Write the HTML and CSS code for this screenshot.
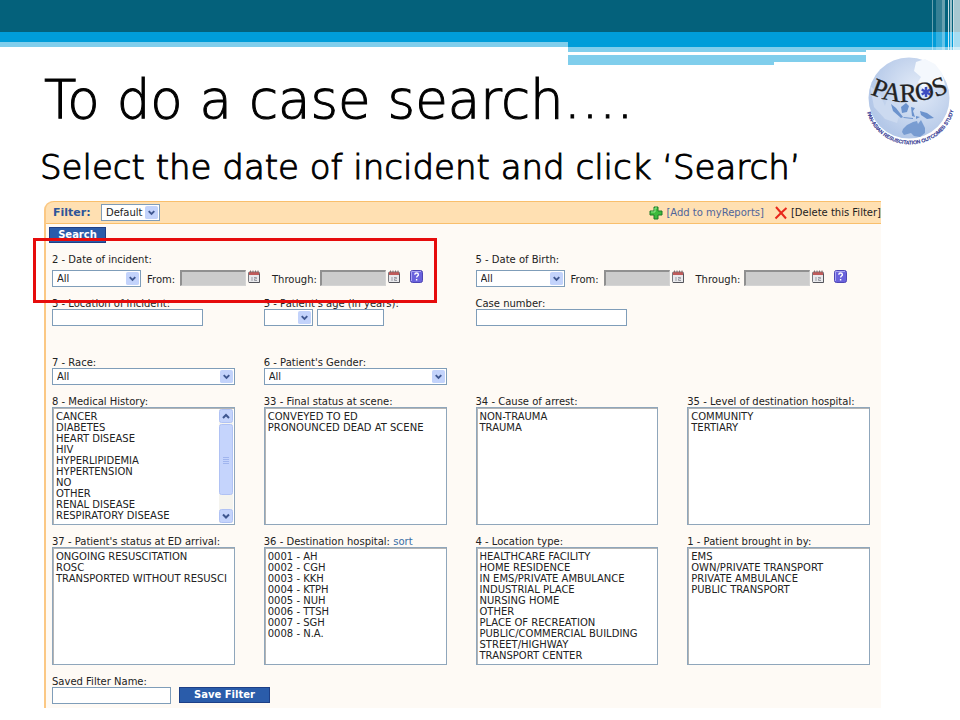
FILE: index.html
```
<!DOCTYPE html>
<html lang="en">
<head>
    <meta charset="UTF-8">
    <meta name="viewport" content="width=device-width, initial-scale=1.0">
    <title>To do a case search</title>
    <link rel="stylesheet" href="styles.css">
</head>
<body>
    <svg class="sprites" aria-hidden="true">
        <symbol id="arrow" viewBox="0 0 14 14">
            <rect width="14" height="14" rx="2" fill="#c3d3fb"/>
            <path d="M4 5.5l3 3 3-3" fill="none" stroke="#3f5790" stroke-width="2"/>
        </symbol>
        <symbol id="calendar" viewBox="0 0 12 13">
            <rect x="0.5" y="2" width="11" height="10.5" rx="1" fill="#e9e9ec" stroke="#77777d"/>
            <rect x="1" y="2" width="10" height="3" fill="#c05a5a"/>
            <path d="M2.5 0.5v2.5M5 0.5v2.5M7.5 0.5v2.5M10 0.5v2.5" stroke="#8a6a6a"/>
            <path d="M4 7v4M6 7.5h2.5v1.3h-2v1.7h2.5" fill="none" stroke="#9d9da5"/>
            <path d="M1 12.5h10.5V4" fill="none" stroke="#55555c"/>
        </symbol>
        <symbol id="help" viewBox="0 0 13 13">
            <rect x="0.5" y="0.5" width="12" height="12" rx="2" fill="#6a62dc" stroke="#4e46b4"/>
            <path d="M1.5 11V1.5H11" fill="none" stroke="#a9a4f2"/>
            <path d="M4.8 4.7c0-2.2 3.6-2.2 3.6 0 0 1.4-1.8 1.3-1.8 2.8M6.6 9v1.5" fill="none" stroke="#fff" stroke-width="1.4"/>
        </symbol>
    </svg>

    <header class="banner">
        <div class="band band-dark"></div>
        <div class="band band-blue"></div>
        <div class="steps">
            <div class="step-left"></div>
            <div class="step-right">
                <div class="step-blue"></div>
                <div class="step-light"></div>
                <div class="step-gap"></div>
                <div class="step-light"></div>
                <div class="step-short"></div>
            </div>
        </div>
        <svg class="stripes" viewBox="0 0 28 50" aria-hidden="true">
            <g fill="#fff">
                <path d="M0 0h1v50H0z" opacity=".4"/>
                <path d="M4 0h6v50H4z" opacity=".2"/>
                <path d="M10 0h3v50h-3z" opacity=".4"/>
                <path d="M16 0h1v50h-1z" opacity=".8"/>
                <path d="M18 0h2v50h-2z" opacity=".6"/>
                <path d="M21 0h1v50h-1z" opacity=".8"/>
                <path d="M22 0h6v50h-6z" opacity=".65"/>
            </g>
        </svg>
        <svg class="logo" viewBox="0 0 94 100" role="img" aria-label="PAROS">
            <defs>
                <radialGradient id="globe" cx=".6" cy=".4" r=".6">
                    <stop offset="0" stop-color="#e4ecf8"/>
                    <stop offset="1" stop-color="#b4c8e8"/>
                </radialGradient>
                <path id="name" d="M4 44Q44 62 92 38"/>
                <path id="arc" d="M1 62.500A45 45 0 0 0 88 59"/>
            </defs>
            <rect width="94" height="100" fill="#fff"/>
            <circle cx="43" cy="48" r="40.500" fill="url(#globe)"/>
            <path d="M50 12l9-3 10 5 7 9 3 12-9 3-7-4-6 5-5-7 3-5-7-6z" fill="#f4f8fd"/>
            <path d="M4 36l10 8 5 12 2-6 8 3 5 10-3 10-12-4-11-12z" fill="#ccdaf0"/>
            <g fill="#6c93cd">
                <path d="M25 54l5 4 7 9-2 1-8-7zM35 57l5-4 3 3-2 6-5 1zM45 57l4 1-2 3 2 6-3-1zM37 67l10 1v1l-9-1zM50 66l4 1-4 2zM54 61l7 2 7 5-7 1-6-4z"/>
                <path d="M37 79l4-4 6-3 4-1 1 3 3-4 4 8 0 5-5 4-6-1-3-3-7 2-2-3z" opacity=".85"/>
            </g>
            <text class="logo-name"><textPath href="#name">PAROS</textPath></text>
            <path d="M60 37v10M55.700 39.500l8.600 5M64.300 39.500l-8.600 5" stroke="#3c4cc0" stroke-width="2.400"/>
            <text class="logo-ring"><textPath href="#arc">PAN-ASIAN RESUSCITATION OUTCOMES STUDY</textPath></text>
        </svg>
    </header>

    <main class="slide">
        <h1 class="title">To do a case search….</h1>
        <p class="subtitle">Select the date of incident and click ‘Search’</p>

        <form class="panel">
            <div class="toolbar">
                <label class="filter-label" for="filter">Filter:</label>
                <div class="select select-filter">
                    <select id="filter"><option>Default</option></select>
                    <svg><use href="#arrow"/></svg>
                </div>
                <a class="tool tool-add" href="#">
                    <svg viewBox="0 0 14 14"><path d="M5 1h4v4h4v4H9v4H5V9H1V5h4z" fill="#3dba3d" stroke="#1c7a28" stroke-linejoin="round"/><path d="M6 6V2h2M2 6h4" fill="none" stroke="#8fe88a"/></svg>
                    [Add to myReports]
                </a>
                <a class="tool tool-delete" href="#">
                    <svg viewBox="0 0 14 14"><path d="M2 1l10 11.500M12.500 2L7 7l-5.500 5.500" fill="none" stroke="#e8281c" stroke-width="2"/></svg>
                    [Delete this Filter]
                </a>
            </div>

            <button class="btn btn-search" type="button">Search</button>
            <div class="highlight"></div>

            <div class="fields">
                <div class="field field-date">
                    <label for="incident">2 - Date of incident:</label>
                    <div class="date-row">
                        <div class="select select-date">
                            <select id="incident"><option>All</option></select>
                            <svg><use href="#arrow"/></svg>
                        </div>
                        <label class="from" for="incident-from">From:</label>
                        <input class="date" id="incident-from" type="text" disabled>
                        <svg class="icon-cal"><use href="#calendar"/></svg>
                        <label class="through" for="incident-to">Through:</label>
                        <input class="date" id="incident-to" type="text" disabled>
                        <svg class="icon-cal"><use href="#calendar"/></svg>
                        <svg class="icon-help"><use href="#help"/></svg>
                    </div>
                </div>
                <div class="field field-date">
                    <label for="birth">5 - Date of Birth:</label>
                    <div class="date-row">
                        <div class="select select-date">
                            <select id="birth"><option>All</option></select>
                            <svg><use href="#arrow"/></svg>
                        </div>
                        <label class="from" for="birth-from">From:</label>
                        <input class="date" id="birth-from" type="text" disabled>
                        <svg class="icon-cal"><use href="#calendar"/></svg>
                        <label class="through" for="birth-to">Through:</label>
                        <input class="date" id="birth-to" type="text" disabled>
                        <svg class="icon-cal"><use href="#calendar"/></svg>
                        <svg class="icon-help"><use href="#help"/></svg>
                    </div>
                </div>

                <div class="field field-text">
                    <label for="location">3 - Location of incident:</label>
                    <input class="text" id="location" type="text">
                </div>
                <div class="field field-text">
                    <label for="age">5 - Patient's age (in years):</label>
                    <div class="age-row">
                        <div class="select select-age">
                            <select aria-label="Age comparison"><option></option></select>
                            <svg><use href="#arrow"/></svg>
                        </div>
                        <input class="text text-age" id="age" type="text">
                    </div>
                </div>
                <div class="field field-text field-wide">
                    <label for="case">Case number:</label>
                    <input class="text" id="case" type="text">
                </div>

                <div class="field">
                    <label for="race">7 - Race:</label>
                    <div class="select">
                        <select id="race"><option>All</option></select>
                        <svg><use href="#arrow"/></svg>
                    </div>
                </div>
                <div class="field">
                    <label for="gender">6 - Patient's Gender:</label>
                    <div class="select">
                        <select id="gender"><option>All</option></select>
                        <svg><use href="#arrow"/></svg>
                    </div>
                </div>

                <div class="field row-start">
                    <label for="history">8 - Medical History:</label>
                    <div class="listbox">
                        <select id="history" multiple size="10">
                            <option>CANCER</option>
                            <option>DIABETES</option>
                            <option>HEART DISEASE</option>
                            <option>HIV</option>
                            <option>HYPERLIPIDEMIA</option>
                            <option>HYPERTENSION</option>
                            <option>NO</option>
                            <option>OTHER</option>
                            <option>RENAL DISEASE</option>
                            <option>RESPIRATORY DISEASE</option>
                        </select>
                        <svg class="scrollbar" viewBox="0 0 14 114" aria-hidden="true">
                            <rect width="14" height="114" fill="#f5f4ef"/>
                            <g fill="#c5d4fc" stroke="#b0c2f4">
                                <rect x="0.500" y="0.500" width="13" height="13" rx="2"/>
                                <rect x="0.500" y="15.500" width="13" height="70" rx="2"/>
                                <rect x="0.500" y="100.500" width="13" height="13" rx="2"/>
                            </g>
                            <path d="M4 9l3-3 3 3M4 105.500l3 3 3-3" fill="none" stroke="#3f5790" stroke-width="2"/>
                            <path d="M4 48.500h6M4 50.500h6M4 52.500h6M4 54.500h6" stroke="#a0b5ee"/>
                        </svg>
                    </div>
                </div>
                <div class="field">
                    <label for="final">33 - Final status at scene:</label>
                    <div class="listbox">
                        <select id="final" multiple size="10">
                            <option>CONVEYED TO ED</option>
                            <option>PRONOUNCED DEAD AT SCENE</option>
                        </select>
                    </div>
                </div>
                <div class="field">
                    <label for="cause">34 - Cause of arrest:</label>
                    <div class="listbox">
                        <select id="cause" multiple size="10">
                            <option>NON-TRAUMA</option>
                            <option>TRAUMA</option>
                        </select>
                    </div>
                </div>
                <div class="field">
                    <label for="level">35 - Level of destination hospital:</label>
                    <div class="listbox">
                        <select id="level" multiple size="10">
                            <option>COMMUNITY</option>
                            <option>TERTIARY</option>
                        </select>
                    </div>
                </div>

                <div class="field">
                    <label for="status">37 - Patient's status at ED arrival:</label>
                    <div class="listbox">
                        <select id="status" multiple size="10">
                            <option>ONGOING RESUSCITATION</option>
                            <option>ROSC</option>
                            <option>TRANSPORTED WITHOUT RESUSCI</option>
                        </select>
                    </div>
                </div>
                <div class="field">
                    <div class="label-row"><label for="hospital">36 - Destination hospital:</label> <a class="sort" href="#">sort</a></div>
                    <div class="listbox">
                        <select id="hospital" multiple size="10">
                            <option>0001 - AH</option>
                            <option>0002 - CGH</option>
                            <option>0003 - KKH</option>
                            <option>0004 - KTPH</option>
                            <option>0005 - NUH</option>
                            <option>0006 - TTSH</option>
                            <option>0007 - SGH</option>
                            <option>0008 - N.A.</option>
                        </select>
                    </div>
                </div>
                <div class="field">
                    <label for="loctype">4 - Location type:</label>
                    <div class="listbox">
                        <select id="loctype" multiple size="10">
                            <option>HEALTHCARE FACILITY</option>
                            <option>HOME RESIDENCE</option>
                            <option>IN EMS/PRIVATE AMBULANCE</option>
                            <option>INDUSTRIAL PLACE</option>
                            <option>NURSING HOME</option>
                            <option>OTHER</option>
                            <option>PLACE OF RECREATION</option>
                            <option>PUBLIC/COMMERCIAL BUILDING</option>
                            <option>STREET/HIGHWAY</option>
                            <option>TRANSPORT CENTER</option>
                        </select>
                    </div>
                </div>
                <div class="field">
                    <label for="brought">1 - Patient brought in by:</label>
                    <div class="listbox">
                        <select id="brought" multiple size="10">
                            <option>EMS</option>
                            <option>OWN/PRIVATE TRANSPORT</option>
                            <option>PRIVATE AMBULANCE</option>
                            <option>PUBLIC TRANSPORT</option>
                        </select>
                    </div>
                </div>
            </div>

            <div class="save">
                <label for="saved">Saved Filter Name:</label>
                <div class="save-row">
                    <input class="text text-save" id="saved" type="text">
                    <button class="btn btn-save" type="button">Save Filter</button>
                </div>
            </div>
        </form>
    </main>
</body>
</html>
```

FILE: styles.css
```
* {
    box-sizing: border-box;
}
body {
    margin: 0;
    background-color: white;
    color: #222;
    font-family: "DejaVu Sans", Verdana, sans-serif;
    font-size: 10px;
    line-height: 11px;
}
input, select, button {
    font: inherit;
    color: inherit;
    margin: 0;
}
a {
    text-decoration: none;
}
svg {
    display: block;
    flex: none;
}
.sprites {
    position: absolute;
    width: 0;
    height: 0;
}

/* banner */
.banner {
    position: relative;
}
.band-dark {
    height: 32px;
    background-color: #04617b;
}
.band-blue {
    height: 10px;
    background-color: #009dd9;
}
.steps {
    display: flex;
}
.step-left {
    width: 568px;
    height: 5px;
    background-color: #80ceec;
}
.step-right {
    flex: 1;
}
.step-blue {
    height: 5px;
    background-color: #009dd9;
}
.step-light {
    height: 5px;
    background-color: #80ceec;
}
.step-gap {
    height: 3px;
}
.step-gap + .step-light {
    height: 7px;
}
.step-short {
    width: 206px;
    height: 3px;
    background-color: #80ceec;
}
.stripes {
    position: absolute;
    top: 0;
    right: 0;
    width: 28px;
    height: 50px;
}
.logo {
    position: absolute;
    top: 50px;
    right: 0;
    width: 94px;
    height: 100px;
}
.logo-name {
    font-family: "Liberation Serif", serif;
    font-size: 26px;
    fill: #222;
    stroke: #222;
    stroke-width: 0.3;
}
.logo-ring {
    font-family: "Liberation Sans", sans-serif;
    font-size: 5px;
    fill: #3b3f96;
    stroke: #3b3f96;
    stroke-width: 0.3;
}

/* headings */
.title {
    margin: 0;
    padding: 3px 44px 0;
    font-family: "Century Gothic", "DejaVu Sans", sans-serif;
    font-size: 53px;
    font-weight: 200;
    line-height: 64px;
    color: black;
    -webkit-text-stroke: 1px black;
}
.subtitle {
    margin: 0;
    padding: 13px 40px 12px;
    font-family: "Century Gothic", "DejaVu Sans", sans-serif;
    font-size: 34px;
    font-weight: 200;
    line-height: 44px;
    color: black;
    -webkit-text-stroke: 1px black;
}

/* filter panel */
.panel {
    position: relative;
    margin: 0 79px 0 44px;
    background-color: #fefaf5;
    border-left: 2px solid #fbc884;
    border-top-left-radius: 9px;
}
.toolbar {
    display: flex;
    align-items: center;
    height: 23px;
    padding-left: 7px;
    background-color: #ffe0b2;
    border-top: 1px solid #f9bf6c;
    border-bottom: 1px solid #f9bf6c;
    border-top-left-radius: 8px;
}
.filter-label {
    width: 48px;
    font-size: 11px;
    font-weight: bold;
    color: #2d5599;
}
.tool {
    display: flex;
    align-items: center;
    gap: 3px;
    white-space: nowrap;
}
.tool svg {
    width: 14px;
    height: 14px;
}
.tool-add {
    margin-left: auto;
    color: #50659b;
}
.tool-delete {
    margin-left: 10px;
    color: #222;
}

.btn {
    display: block;
    padding: 0;
    height: 16px;
    border: 1px solid #1d3f86;
    background-color: #2a5caa;
    color: white;
    font-weight: bold;
    line-height: 12px;
}
.btn-search {
    width: 57px;
    margin: 3px 0 0 3px;
}
.btn-save {
    width: 91px;
}
.highlight {
    position: absolute;
    top: 37px;
    left: -13px;
    width: 404px;
    height: 65px;
    border: 3px solid #e60c0c;
}

.fields {
    display: grid;
    grid-template-columns: repeat(4, 1fr);
    column-gap: 29px;
    row-gap: 11px;
    padding: 11px 11px 0 6px;
}
.field {
    display: flex;
    flex-direction: column;
    min-width: 0;
    white-space: nowrap;
}
.field-date {
    grid-column: span 2;
}
.field-date > label {
    margin-bottom: 5px;
}
.field-text {
    min-height: 48px;
}
.field-wide {
    grid-column: span 2;
}
.row-start {
    grid-column-start: 1;
}
.date-row,
.age-row,
.save-row {
    display: flex;
}
.from {
    width: 33px;
    margin: 4px 0 0 6px;
}
.through {
    width: 48px;
    margin: 4px 0 0 12px;
}

.select {
    position: relative;
    height: 17px;
}
.select select {
    appearance: none;
    display: block;
    width: 100%;
    height: 17px;
    padding: 0 4px;
    border: 1px solid #7f9db9;
    border-radius: 0;
    background-color: white;
    line-height: 15px;
}
.select svg {
    position: absolute;
    top: 2px;
    right: 2px;
    width: 13px;
    height: 13px;
    pointer-events: none;
}
.select-filter {
    width: 59px;
}
.select-date {
    width: 89px;
}
.select-age {
    width: 49px;
    margin-right: 4px;
}
.date {
    width: 66px;
    height: 16px;
    border: 1px solid #d4d4d4;
    border-top: 2px solid #909090;
    border-left: 2px solid #909090;
    background-color: #cccccc;
}
.icon-cal {
    width: 12px;
    height: 13px;
    margin-left: 2px;
}
.icon-help {
    width: 13px;
    height: 13px;
    margin-left: 10px;
}
.text {
    width: 151px;
    height: 17px;
    padding: 0 3px;
    border: 1px solid #7f9db9;
    background-color: white;
}
.text-age {
    width: 67px;
}
.text-save {
    width: 119px;
    margin-right: 8px;
}

.listbox {
    position: relative;
    height: 118px;
    border: 1px solid #8fa6bb;
    box-shadow: inset 1px 1px 0 #b4b4b4;
    background-color: white;
}
.listbox select {
    display: block;
    width: 100%;
    height: 116px;
    padding: 3px 1px 0 2px;
    border: 0;
    background-color: transparent;
    overflow: hidden;
    scrollbar-width: none;
}
.listbox option {
    min-height: 0;
    padding: 0 1px;
    line-height: 11px;
}
.scrollbar {
    position: absolute;
    top: 1px;
    right: 1px;
    width: 14px;
    height: 114px;
}
.sort {
    color: #3a6ea5;
}

.save {
    padding: 11px 6px 4px;
}
```
